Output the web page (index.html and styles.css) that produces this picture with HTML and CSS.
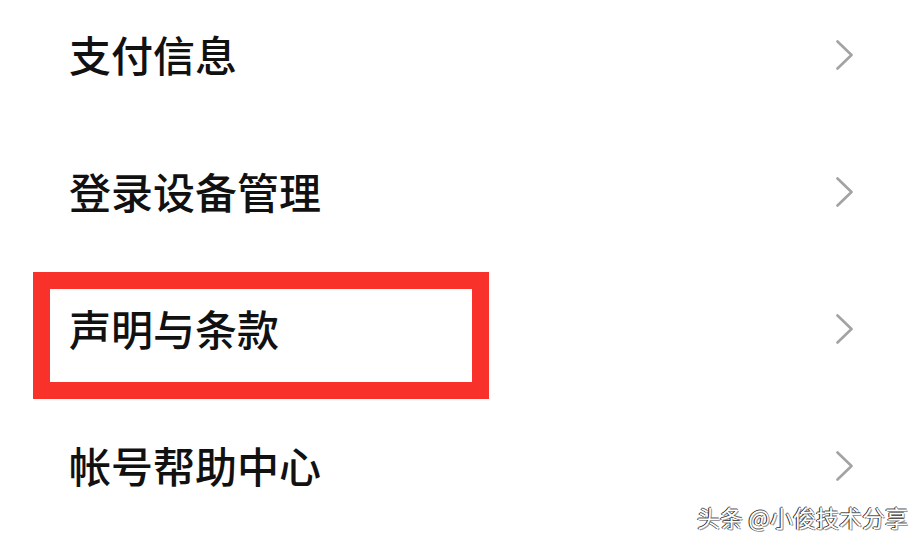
FILE: index.html
```html
<!DOCTYPE html>
<html lang="zh-CN">
<head>
<meta charset="utf-8">
<link rel="stylesheet" href="styles.css">
</head>
<body>
<div class="page">
  <ul class="menu">
    <li class="row"><span class="label">支付信息</span><svg class="chev" viewBox="0 0 17 30" width="17" height="30"><polyline points="1.5,1.5 15.5,15 1.5,28.5"/></svg></li>
    <li class="row"><span class="label">登录设备管理</span><svg class="chev" viewBox="0 0 17 30" width="17" height="30"><polyline points="1.5,1.5 15.5,15 1.5,28.5"/></svg></li>
    <li class="row row-marked"><span class="mark"></span><span class="label">声明与条款</span><svg class="chev" viewBox="0 0 17 30" width="17" height="30"><polyline points="1.5,1.5 15.5,15 1.5,28.5"/></svg></li>
    <li class="row"><span class="label">帐号帮助中心</span><svg class="chev" viewBox="0 0 17 30" width="17" height="30"><polyline points="1.5,1.5 15.5,15 1.5,28.5"/></svg></li>
  </ul>
  <div class="watermark">头条 @小俊技术分享</div>
</div>
</body>
</html>
```

FILE: styles.css
```css
html, body {
  margin: 0;
  padding: 0;
  background: #fff;
}
.page {
  position: relative;
  width: 923px;
  height: 545px;
  overflow: hidden;
  background: #fff;
  font-family: "Noto Sans CJK SC", "Noto Sans", sans-serif;
}
.menu {
  list-style: none;
  margin: -14px 0 0 0;
  padding: 0;
}
.row {
  position: relative;
  height: 137px;
  display: flex;
  align-items: center;
  justify-content: space-between;
  padding: 0 70px 0 69px;
}
.label {
  position: relative;
  font-size: 42px;
  line-height: 1;
  font-weight: 500;
  color: #111;
  top: -1px;
}
.chev {
  display: block;
  fill: none;
  stroke: #a3a3a3;
  stroke-width: 2.6;
  stroke-linecap: round;
  stroke-linejoin: round;
}
.mark {
  position: absolute;
  left: 33px;
  top: 12px;
  width: 456px;
  height: 127px;
  box-sizing: border-box;
  border: 17px solid #f8312b;
}
.watermark {
  position: absolute;
  right: 15px;
  bottom: 16px;
  font-size: 23px;
  line-height: 1;
  color: #fff;
  text-shadow: -1px 0 0 #222, 0 -1px 0 #555, 1px 1px 0 #999;
}
```
